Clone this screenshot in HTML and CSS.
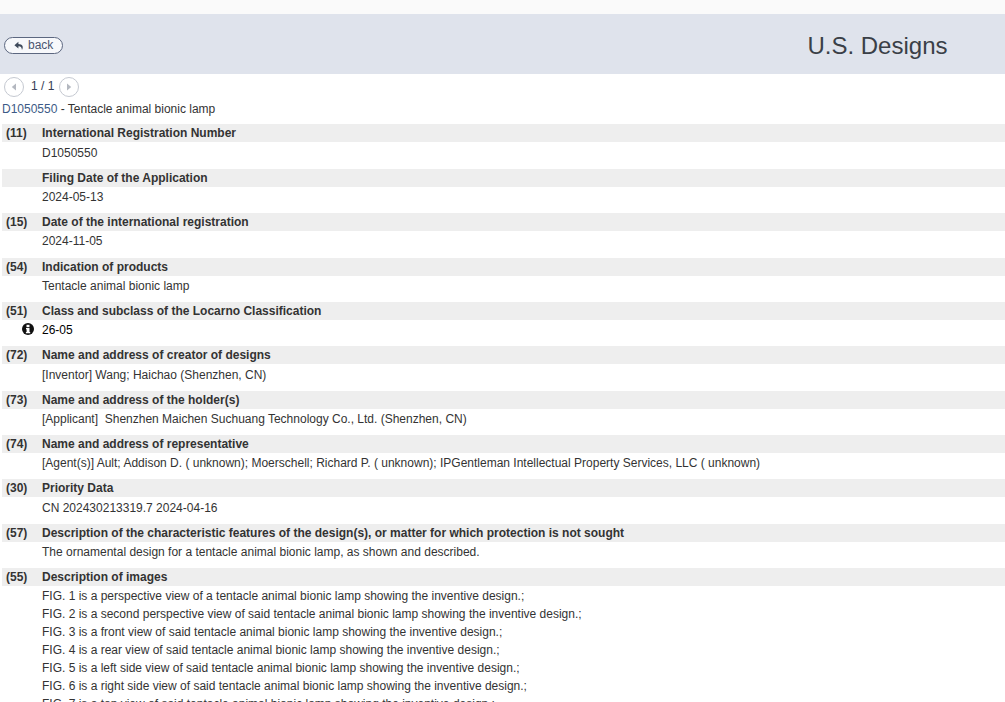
FILE: index.html
```html
<!DOCTYPE html>
<html lang="en">
<head>
  <meta charset="UTF-8" />
  <title>U.S. Designs</title>
  <link rel="stylesheet" href="styles.css">
</head>
<body>
  <div class="topstrip"></div>

  <div class="header">
    <a class="back" href="#">
      <svg class="back-icon" viewBox="0 0 10 10" width="10" height="10"><path d="M4.4 0.8 L0.4 4.2 L4.4 7.4 V5.4 C6.4 5.2 7.6 6 8 9 C9.8 5.4 8.4 3 4.4 2.9 Z" fill="#3f4a5c"/></svg>
      back
    </a>
    <h1>U.S. Designs</h1>
  </div>

  <div class="pager">
    <span class="circle"><svg viewBox="0 0 6 8" width="6" height="8"><path d="M5 0.5 V7.5 L0.8 4 Z" fill="#b4b8c0"/></svg></span>
    <span class="count">1 / 1</span>
    <span class="circle"><svg viewBox="0 0 6 8" width="6" height="8"><path d="M1 0.5 V7.5 L5.2 4 Z" fill="#b4b8c0"/></svg></span>
  </div>

  <div class="doc-title"><a href="#">D1050550</a> - Tentacle animal bionic lamp</div>

  <div class="section">
    <div class="bar"><span class="code">(11)</span><span>International Registration Number</span></div>
    <div class="value">D1050550</div>
  </div>
  <div class="section">
    <div class="bar"><span class="code"></span><span>Filing Date of the Application</span></div>
    <div class="value">2024-05-13</div>
  </div>
  <div class="section">
    <div class="bar"><span class="code">(15)</span><span>Date of the international registration</span></div>
    <div class="value">2024-11-05</div>
  </div>
  <div class="section">
    <div class="bar"><span class="code">(54)</span><span>Indication of products</span></div>
    <div class="value">Tentacle animal bionic lamp</div>
  </div>
  <div class="section">
    <div class="bar"><span class="code">(51)</span><span>Class and subclass of the Locarno Classification</span></div>
    <div class="value value-dark">
      <svg class="info" viewBox="0 0 12 12" width="12" height="12"><circle cx="6" cy="6" r="6" fill="#111"/><rect x="4.5" y="1.8" width="3" height="2.4" fill="#fff"/><path d="M4 5 H7.5 V8.9 H8.2 V10.2 H3.9 V8.9 H4.6 V6.2 H4 Z" fill="#fff"/></svg>
      26-05
    </div>
  </div>
  <div class="section">
    <div class="bar"><span class="code">(72)</span><span>Name and address of creator of designs</span></div>
    <div class="value">[Inventor] Wang; Haichao (Shenzhen, CN)</div>
  </div>
  <div class="section">
    <div class="bar"><span class="code">(73)</span><span>Name and address of the holder(s)</span></div>
    <div class="value">[Applicant]&nbsp; Shenzhen Maichen Suchuang Technology Co., Ltd. (Shenzhen, CN)</div>
  </div>
  <div class="section">
    <div class="bar"><span class="code">(74)</span><span>Name and address of representative</span></div>
    <div class="value">[Agent(s)] Ault; Addison D. ( unknown); Moerschell; Richard P. ( unknown); IPGentleman Intellectual Property Services, LLC ( unknown)</div>
  </div>
  <div class="section">
    <div class="bar"><span class="code">(30)</span><span>Priority Data</span></div>
    <div class="value">CN 202430213319.7 2024-04-16</div>
  </div>
  <div class="section">
    <div class="bar"><span class="code">(57)</span><span>Description of the characteristic features of the design(s), or matter for which protection is not sought</span></div>
    <div class="value">The ornamental design for a tentacle animal bionic lamp, as shown and described.</div>
  </div>
  <div class="section">
    <div class="bar"><span class="code">(55)</span><span>Description of images</span></div>
    <div class="value">
      FIG. 1 is a perspective view of a tentacle animal bionic lamp showing the inventive design.;<br>
      FIG. 2 is a second perspective view of said tentacle animal bionic lamp showing the inventive design.;<br>
      FIG. 3 is a front view of said tentacle animal bionic lamp showing the inventive design.;<br>
      FIG. 4 is a rear view of said tentacle animal bionic lamp showing the inventive design.;<br>
      FIG. 5 is a left side view of said tentacle animal bionic lamp showing the inventive design.;<br>
      FIG. 6 is a right side view of said tentacle animal bionic lamp showing the inventive design.;<br>
      FIG. 7 is a top view of said tentacle animal bionic lamp showing the inventive design.;
    </div>
  </div>
</body>
</html>
```

FILE: styles.css
```css
html {
  height: 100%;
  overflow: hidden;
}

body {
  margin: 0;
  font-family: "Liberation Sans", Arial, sans-serif;
  font-size: 12px;
  color: #333;
  background: #fff;
}

.topstrip {
  height: 14px;
  background: #fafafa;
}

.header {
  height: 60px;
  background: #dfe3ec;
  display: flex;
  align-items: center;
  justify-content: space-between;
  padding: 0 57.5px 0 4px;
}

.header h1 {
  margin: 4px 0 0;
  font-size: 24px;
  font-weight: normal;
  color: #3a3f47;
}

.back {
  display: flex;
  align-items: center;
  gap: 4px;
  height: 15px;
  margin-top: 2px;
  padding: 0 9px 0 9px;
  border: 1px solid #5c6780;
  border-radius: 9px;
  background: #f7f8fb;
  color: #4a5570;
  text-decoration: none;
  line-height: 15px;
}

.back-icon {
  margin-top: 2px;
}

.pager {
  display: flex;
  align-items: center;
  gap: 5px;
  height: 26px;
  padding: 0 0 0 4px;
}

.count {
  color: #353c55;
  margin: -2px 0 0 2px;
}

.circle {
  width: 18px;
  height: 18px;
  border: 1px solid #c5c9d1;
  border-radius: 50%;
  display: flex;
  align-items: center;
  justify-content: center;
}

.doc-title {
  height: 24.4px;
  line-height: 18px;
  padding-left: 2px;
}

.doc-title a {
  color: #3c5a86;
  text-decoration: none;
}

.section {
  margin-left: 2px;
  margin-bottom: 7.08px;
}

.bar {
  display: flex;
  height: 18px;
  line-height: 18px;
  background: #eee;
  font-weight: bold;
}

.code {
  width: 40px;
  padding-left: 4px;
  box-sizing: border-box;
  flex: none;
}

.value {
  padding-left: 40px;
  line-height: 18px;
  position: relative;
  margin-top: 1.3px;
}

.value-dark {
  color: #000;
}

.info {
  position: absolute;
  left: 20px;
  top: 2px;
}
```
